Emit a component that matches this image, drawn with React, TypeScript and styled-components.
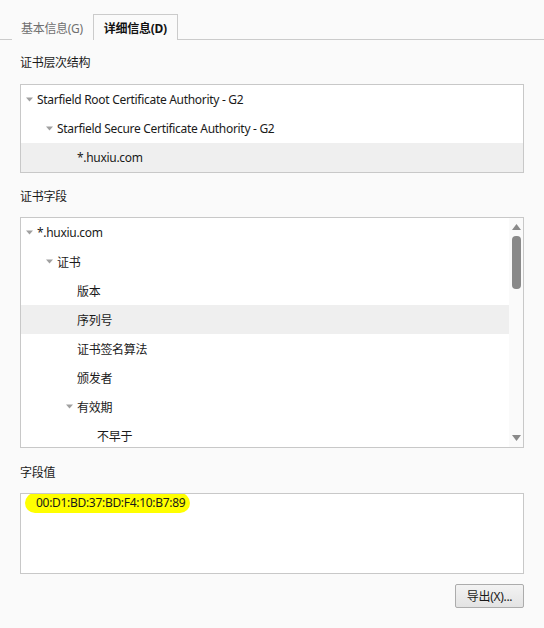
import React from "react";
import styled, { createGlobalStyle } from "styled-components";

const Global = createGlobalStyle`
  html, body { margin: 0; padding: 0; background: #fafafa; }
  body {
    font-family: "Noto Sans", "Noto Sans CJK SC", sans-serif;
    font-size: 12px;
    letter-spacing: -0.3px;
    color: #1a1a1a;
  }
`;

const Page = styled.div`
  width: 544px;
  height: 628px;
  background: #fafafa;
  display: flex;
  flex-direction: column;
  box-sizing: border-box;
`;

const TabBar = styled.div`
  display: flex;
  align-items: flex-end;
  height: 39px;
  padding-left: 12px;
  border-bottom: 1px solid #cbcbcb;
  box-sizing: content-box;
`;

const Tab = styled.div<{ $active?: boolean }>`
  box-sizing: border-box;
  display: flex;
  align-items: center;
  padding: ${(p) => (p.$active ? "0 10px" : "0 9px 0 8px")};
  color: ${(p) => (p.$active ? "#111" : "#707070")};
  font-weight: ${(p) => (p.$active ? 700 : 400)};
  border: 1px solid ${(p) => (p.$active ? "#cbcbcb" : "transparent")};
  border-bottom: none;
  background: #fafafa;
  margin-bottom: -1px;
  height: ${(p) => (p.$active ? "26px" : "25px")};
`;

const Content = styled.div`
  display: flex;
  flex-direction: column;
  padding: 0 20px;
`;

const SectionLabel = styled.div<{ $top: number; $bottom: number }>`
  height: 16px;
  line-height: 16px;
  margin: ${(p) => `${p.$top}px 0 ${p.$bottom}px 0`};
`;

const Box = styled.div<{ $height: number }>`
  position: relative;
  height: ${(p) => p.$height}px;
  border: 1px solid #c8c8c8;
  background: #fff;
  box-sizing: border-box;
  overflow: hidden;
  display: flex;
`;

const TreeList = styled.div`
  flex: 1;
  display: flex;
  flex-direction: column;
  min-width: 0;
`;

const Row = styled.div<{ $level: number; $selected?: boolean }>`
  flex: none;
  height: 29px;
  display: flex;
  align-items: center;
  padding-left: ${(p) => 5 + p.$level * 20}px;
  background: ${(p) => (p.$selected ? "#efefef" : "transparent")};
  white-space: nowrap;
`;

const Toggle = styled.span`
  width: 11px;
  flex: none;
  display: flex;
  align-items: center;
`;

const Caret = () => (
  <svg width="7" height="5" viewBox="0 0 7 5">
    <path d="M0 0.5 L7 0.5 L3.5 4.5 Z" fill="#a0a0a0" />
  </svg>
);

const Scrollbar = styled.div`
  width: 14px;
  flex: none;
  background: #fafafa;
  display: flex;
  flex-direction: column;
  align-items: center;
`;

const ScrollArrow = styled.div`
  height: 18px;
  display: flex;
  align-items: center;
  justify-content: center;
`;

const Thumb = styled.div`
  width: 9px;
  height: 53px;
  border-radius: 4px;
  background: #898989;
`;

const Track = styled.div`
  flex: 1;
`;

const ValueText = styled.span`
  display: inline-block;
  margin: -1px 0 0 4px;
  height: 20px;
  line-height: 20px;
  padding: 0 5px 0 11px;
  border-radius: 10px;
  background: #ffff00;
  white-space: nowrap;
`;

const ButtonRow = styled.div`
  display: flex;
  justify-content: flex-end;
  margin-top: 10px;
`;

const Button = styled.button`
  width: 69px;
  height: 24px;
  font-family: "Noto Sans", "Noto Sans CJK SC", sans-serif;
  font-size: 12px;
  letter-spacing: -0.3px;
  color: #1a1a1a;
  border: 1px solid #acacac;
  border-radius: 2px;
  background: linear-gradient(#f3f3f3, #e3e3e3);
  padding: 0;
`;

type Node = { label: string; level: number; expandable?: boolean; selected?: boolean };

const hierarchy: Node[] = [
  { label: "Starfield Root Certificate Authority - G2", level: 0, expandable: true },
  { label: "Starfield Secure Certificate Authority - G2", level: 1, expandable: true },
  { label: "*.huxiu.com", level: 2, selected: true },
];

const fields: Node[] = [
  { label: "*.huxiu.com", level: 0, expandable: true },
  { label: "证书", level: 1, expandable: true },
  { label: "版本", level: 2 },
  { label: "序列号", level: 2, selected: true },
  { label: "证书签名算法", level: 2 },
  { label: "颁发者", level: 2 },
  { label: "有效期", level: 2, expandable: true },
  { label: "不早于", level: 3 },
];

const Tree = ({ nodes }: { nodes: Node[] }) => (
  <TreeList>
    {nodes.map((n, i) => (
      <Row key={i} $level={n.level} $selected={n.selected}>
        <Toggle>{n.expandable ? <Caret /> : null}</Toggle>
        <span>{n.label}</span>
      </Row>
    ))}
  </TreeList>
);

export default function App() {
  return (
    <Page>
      <Global />
      <TabBar>
        <Tab>基本信息(G)</Tab>
        <Tab $active>详细信息(D)</Tab>
      </TabBar>
      <Content>
        <SectionLabel $top={15} $bottom={13}>证书层次结构</SectionLabel>
        <Box $height={89}>
          <Tree nodes={hierarchy} />
        </Box>
        <SectionLabel $top={16} $bottom={12}>证书字段</SectionLabel>
        <Box $height={231}>
          <Tree nodes={fields} />
          <Scrollbar>
            <ScrollArrow>
              <svg width="9" height="6" viewBox="0 0 9 6">
                <path d="M0 6 L9 6 L4.5 0 Z" fill="#8a8a8a" />
              </svg>
            </ScrollArrow>
            <Thumb />
            <Track />
            <ScrollArrow>
              <svg width="9" height="6" viewBox="0 0 9 6">
                <path d="M0 0 L9 0 L4.5 6 Z" fill="#8a8a8a" />
              </svg>
            </ScrollArrow>
          </Scrollbar>
        </Box>
        <SectionLabel $top={17} $bottom={12}>字段值</SectionLabel>
        <Box $height={81}>
          <div>
            <ValueText>00:D1:BD:37:BD:F4:10:B7:89</ValueText>
          </div>
        </Box>
        <ButtonRow>
          <Button>导出(X)...</Button>
        </ButtonRow>
      </Content>
    </Page>
  );
}
